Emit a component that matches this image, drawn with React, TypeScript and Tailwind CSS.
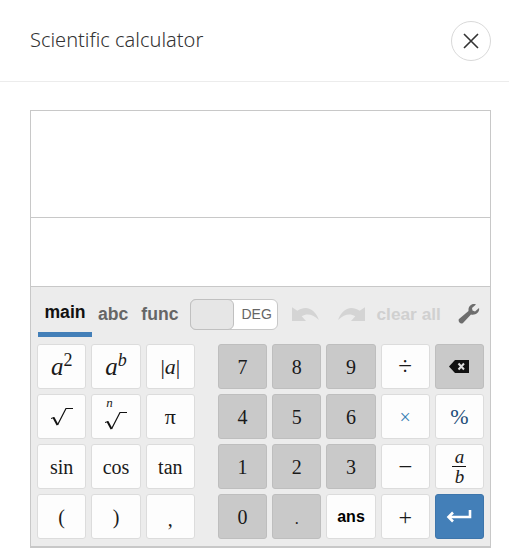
import React from 'react';

const Key: React.FC<{ kind?: 'white' | 'grey' | 'blue'; className?: string; children: React.ReactNode }> = ({ kind = 'white', className = '', children }) => {
    const base =
        kind === 'grey'
            ? 'bg-[#c9c9c9] border-[#bebebe]'
            : kind === 'blue'
              ? 'bg-[#437fb8] border-[#3d75ab] text-white'
              : 'bg-[#fdfdfd] border-[#dcdcdc]';
    return (
        <div
            className={`h-[45px] rounded-[3px] border flex items-center justify-center font-['Liberation_Serif',serif] text-[#1a1a1a] text-[20px] ${base} ${className}`}
        >
            {children}
        </div>
    );
};

const Sup: React.FC<{ base: string; sup: string; upright?: boolean }> = ({ base, sup, upright }) => (
    <span className="italic text-[25px] leading-none">
        {base}
        <span className={`text-[18px] relative -top-[9px] ${upright ? 'not-italic' : ''}`}>{sup}</span>
    </span>
);

const SqrtMark: React.FC = () => (
    <svg width="22" height="18" viewBox="0 0 22 18" fill="none" stroke="#111">
        <path d="M0 10.5 L3 9.5" strokeWidth="1" />
        <path d="M2.5 9.5 L6.5 17" strokeWidth="2" />
        <path d="M6.5 17 L15 0.5 L22 0.5" strokeWidth="1.2" />
    </svg>
);

const App: React.FC = () => {
    return (
        <div className="w-[509px] h-[553px] bg-white overflow-hidden font-['Noto_Sans',sans-serif]">
            {/* Header */}
            <div className="h-[82px] border-b border-[#ececec] pl-[30px] pr-[18px] flex items-center justify-between">
                <span className="text-[20px] text-[#333] font-light pb-[2px]">Scientific calculator</span>
                <button className="w-10 h-10 rounded-full border border-[#d9d9d9] flex items-center justify-center">
                    <svg width="16" height="16" viewBox="0 0 16 16" stroke="#333" strokeWidth="1.6" fill="none">
                        <path d="M1 1 L15 15 M15 1 L1 15" />
                    </svg>
                </button>
            </div>

            {/* Calculator */}
            <div className="mt-[28px] mx-[30px] w-[461px] border border-[#c8c8c8] border-b-2">
                <div className="h-[107px] border-b border-[#c8c8c8]" />
                <div className="h-[69px] border-b border-[#c8c8c8]" />

                <div className="bg-[#ececec] h-[259px] px-[6px]">
                    {/* Toolbar */}
                    <div className="h-[50px] flex items-center font-['Liberation_Sans',sans-serif] font-bold text-[17.6px]">
                        <div className="w-[54px] h-[50px] ml-[1px] border-b-[5px] border-[#437fb8] flex items-center justify-center text-[#111] pt-[5px]">
                            main
                        </div>
                        <span className="ml-[6px] text-[#666] pt-[5px]">abc</span>
                        <span className="ml-[13px] text-[#666] pt-[5px]">func</span>
                        <div className="ml-[12px] mt-[4px] w-[88px] h-[31px] rounded-[6px] border border-[#c8c8c8] bg-white flex items-center">
                            <div className="w-[44px] h-[31px] -ml-px rounded-[6px] border border-[#c0c0c0] bg-[#e6e6e6]" />
                            <span className="ml-[7px] text-[14px] font-normal text-[#666]">DEG</span>
                        </div>
                        <svg className="ml-[14px] mt-[3px]" width="28" height="17" viewBox="0 0 26 16" fill="#d4d4d4" preserveAspectRatio="none">
                            <path d="M0 2 L0 15 L13 15 L9 10.5 C14 7.5 19 8.5 25 14 C22 5 14 -1 5 5.5 Z" />
                        </svg>
                        <svg className="ml-[17px] mt-[3px]" width="28" height="17" viewBox="0 0 26 16" fill="#d4d4d4" preserveAspectRatio="none">
                            <path d="M26 2 L26 15 L13 15 L17 10.5 C12 7.5 7 8.5 1 14 C4 5 12 -1 21 5.5 Z" />
                        </svg>
                        <span className="ml-[11px] pt-[5px] text-[#d0d0d0] text-[17.3px]">clear all</span>
                        <svg className="ml-[17px] mt-[4px]" width="22" height="22" viewBox="0 0 22 22" fill="#6e6e6e">
                            <path d="M21 5 L17 8.5 L14.5 7.5 L14 5 L18 1.5 C14 0 10 3 10.5 8 L1 16 C-0.5 18 2.5 22 5 20 L13 11.5 C18 12.5 22 9 21 5 Z" />
                        </svg>
                    </div>

                    {/* Keys */}
                    <div className="mt-[7px] flex">
                        <div className="w-[158px] grid grid-cols-3 gap-[5px]">
                            <Key><Sup base="a" sup="2" upright /></Key>
                            <Key><Sup base="a" sup="b" /></Key>
                            <Key><span className="text-[22px]">|<i>a</i>|</span></Key>
                            <Key><SqrtMark /></Key>
                            <Key className="relative">
                                <i className="absolute left-[14px] top-[1px] text-[13px] leading-none">n</i>
                                <span className="mt-[8px]"><SqrtMark /></span>
                            </Key>
                            <Key><span className="text-[22px]">π</span></Key>
                            <Key>sin</Key>
                            <Key>cos</Key>
                            <Key>tan</Key>
                            <Key>(</Key>
                            <Key>)</Key>
                            <Key><span className="mt-[5px]">,</span></Key>
                        </div>
                        <div className="ml-[23px] w-[266px] grid grid-cols-5 gap-[5px]">
                            <Key kind="grey">7</Key>
                            <Key kind="grey">8</Key>
                            <Key kind="grey">9</Key>
                            <Key><span className="text-[25px]">÷</span></Key>
                            <Key kind="grey">
                                <svg width="20" height="13" viewBox="0 0 20 13">
                                    <path d="M0 6.5 L6 0 L20 0 L20 13 L6 13 Z" fill="#111" />
                                    <path d="M9.5 3.5 L15 9.5 M15 3.5 L9.5 9.5" stroke="#ddd" strokeWidth="2" />
                                </svg>
                            </Key>
                            <Key kind="grey">4</Key>
                            <Key kind="grey">5</Key>
                            <Key kind="grey">6</Key>
                            <Key><span className="text-[#3a7fb5]">×</span></Key>
                            <Key><span className="text-[22px] text-[#1f4f7a]">%</span></Key>
                            <Key kind="grey">1</Key>
                            <Key kind="grey">2</Key>
                            <Key kind="grey">3</Key>
                            <Key><span className="text-[25px]">−</span></Key>
                            <Key>
                                <span className="flex flex-col items-center italic text-[19px] leading-[19px]">
                                    <span>a</span>
                                    <span className="w-[14px] border-t border-[#111]" />
                                    <span>b</span>
                                </span>
                            </Key>
                            <Key kind="grey">0</Key>
                            <Key kind="grey"><span className="text-[16px] mt-[5px]">.</span></Key>
                            <Key><span className="font-['Liberation_Sans',sans-serif] font-bold text-[16px] text-black">ans</span></Key>
                            <Key><span className="text-[24px]">+</span></Key>
                            <Key kind="blue">
                                <svg width="26" height="14" viewBox="0 0 26 14" fill="none" stroke="#fff" strokeWidth="2.6">
                                    <path d="M24 0 L24 7 L3 7" />
                                    <path d="M7 2.5 L2.5 7 L7 11.5" />
                                </svg>
                            </Key>
                        </div>
                    </div>
                </div>
            </div>
        </div>
    );
};

export default App;
